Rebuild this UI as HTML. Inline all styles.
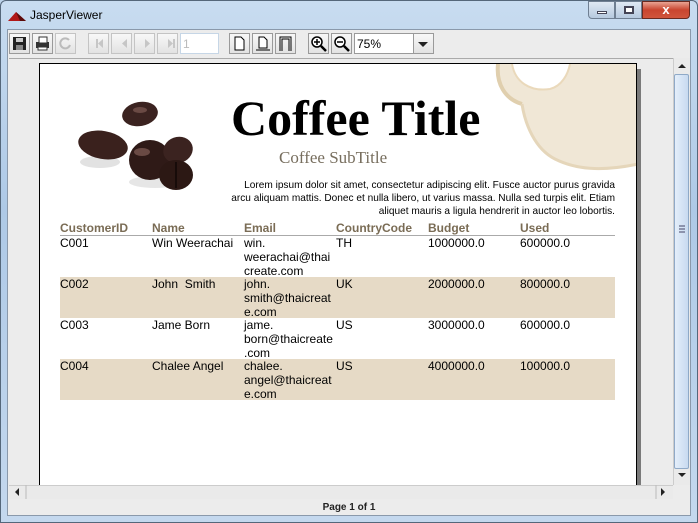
<!DOCTYPE html>
<html><head><style>
*{margin:0;padding:0;box-sizing:border-box}
body{width:698px;height:523px;overflow:hidden;background:#bcd3ea;font-family:"Liberation Sans",sans-serif;position:relative}
.abs{position:absolute}
.win{left:0;top:0;width:698px;height:523px;background:linear-gradient(#c8dcf0,#aec9e6 40%,#c4d8ee);border:1px solid #55677a;border-radius:6px 6px 0 0}
.title{left:30px;top:8px;font-size:12px;color:#000}
.client{left:7px;top:29px;width:684px;height:487px;background:#ececec;border:1px solid #8a99ab}
.btn{position:absolute;top:33px;width:21px;height:21px;border:1px solid #9a9a9a;background:linear-gradient(#f8f8f8,#e2e2e2)}
.dis{border-color:#c4c4c4}
.td{position:absolute;font-size:12px;color:#000;line-height:14px}
.th{position:absolute;top:221px;font-size:12px;font-weight:bold;color:#7a6c55}
.row{position:absolute;left:60px;width:555px;height:41px;background:#e6dac6}
</style></head><body>
<div class="abs win"></div>
<svg class="abs" style="left:7px;top:10px" width="20" height="12"><path d="M1 11 L9 2 L19 11 Z" fill="#b01818"/><path d="M9 2 L19 11 L13 11Z" fill="#5a0a0a"/></svg>
<div class="abs title">JasperViewer</div>
<div class="abs" style="left:588px;top:1px;width:27px;height:18px;border:1px solid #6f7f92;border-radius:0 0 0 4px;background:linear-gradient(#dfe9f4,#b6c9de)"><div style="margin:9px 8px;width:10px;height:3px;background:#fff;border:1px solid #445"></div></div>
<div class="abs" style="left:615px;top:1px;width:27px;height:18px;border:1px solid #6f7f92;background:linear-gradient(#dfe9f4,#b6c9de)"><div style="margin:4px 8px;width:10px;height:8px;border:2px solid #445;background:#fff"></div></div>
<div class="abs" style="left:642px;top:1px;width:48px;height:18px;border:1px solid #6a2a20;border-radius:0 0 4px 0;background:linear-gradient(#e9a393,#c9452f 50%,#d0553c);color:#fff;font-weight:bold;font-size:13px;text-align:center;line-height:16px">x</div>
<div class="abs client"></div>
<div class="btn" style="left:9px"><svg width="19" height="19"><rect x="3" y="3" width="13" height="13" fill="#222"/><rect x="6" y="4" width="7" height="4" fill="#ccc"/><rect x="6" y="11" width="7" height="5" fill="#888"/></svg></div>
<div class="btn" style="left:32px"><svg width="19" height="19"><rect x="3" y="8" width="13" height="6" fill="#333"/><rect x="6" y="3" width="8" height="6" fill="#fff" stroke="#333"/><rect x="5" y="13" width="9" height="3" fill="#fff" stroke="#333"/></svg></div>
<div class="btn dis" style="left:55px"><svg width="19" height="19"><path d="M13 6 A5 5 0 1 0 14 11" fill="none" stroke="#bbb" stroke-width="2"/></svg></div>
<div class="btn dis" style="left:88px"></div><div class="btn dis" style="left:111px"></div><div class="btn dis" style="left:134px"></div><div class="btn dis" style="left:157px"></div>
<div class="abs" style="left:180px;top:33px;width:39px;height:21px;border:1px solid #c6d6e6;background:#fff;color:#bbb;font-size:12px;padding:3px 2px">1</div>
<svg class="abs" style="left:88px;top:33px" width="92" height="21" fill="#c6c6c6"><rect x="8" y="6" width="2" height="9"/><path d="M15 6 L10 10.5 L15 15Z"/><path d="M39 6 L34 10.5 L39 15Z"/><path d="M57 6 L62 10.5 L57 15Z"/><path d="M80 6 L85 10.5 L80 15Z"/><rect x="85" y="6" width="2" height="9"/></svg>
<div class="btn" style="left:229px"><svg width="19" height="19"><path d="M5 3 H11 L14 6 V16 H5Z" fill="#fff" stroke="#000"/></svg></div>
<div class="btn" style="left:252px"><svg width="19" height="19"><path d="M6 3 H11 L14 6 V14 H6Z" fill="#fff" stroke="#000"/><path d="M3 16 H17" stroke="#000"/></svg></div>
<div class="btn" style="left:275px"><svg width="19" height="19"><path d="M4 17 V3 H15 V17 M6 17 V5 H13 V17" fill="none" stroke="#000"/></svg></div>
<div class="btn" style="left:308px"><svg width="19" height="19"><circle cx="8" cy="8" r="5" fill="#fff" stroke="#000" stroke-width="1.5"/><path d="M12 12 L17 17" stroke="#000" stroke-width="2.5"/><path d="M5 8 H11 M8 5 V11" stroke="#000" stroke-width="1.5"/></svg></div>
<div class="btn" style="left:331px"><svg width="19" height="19"><circle cx="8" cy="8" r="5" fill="#fff" stroke="#000" stroke-width="1.5"/><path d="M12 12 L17 17" stroke="#000" stroke-width="2.5"/><path d="M5 8 H11" stroke="#000" stroke-width="1.5"/></svg></div>
<div class="abs" style="left:354px;top:33px;width:60px;height:21px;border:1px solid #9a9a9a;background:#fff;font-size:12px;padding:3px 2px">75%</div>
<div class="btn" style="left:413px;width:21px"><svg width="19" height="19"><path d="M4 8 H14 L9 13Z" fill="#222"/></svg></div>
<div class="abs" style="left:9px;top:58px;width:664px;height:427px;background:#ececec;border-top:1px solid #aaa"></div>
<div class="abs" style="left:636px;top:69px;width:5px;height:416px;background:#7a7a7a"></div>
<div class="abs" style="left:39px;top:63px;width:598px;height:423px;background:#fff;border:1px solid #000;border-bottom:none;overflow:hidden">
 <svg class="abs" style="left:410px;top:0" width="188" height="130">
  <path d="M48 0 C46 20 55 35 72 40 C75 60 85 85 105 95 C125 105 150 108 188 100 L188 0 Z" fill="#f0e7d6"/>
  <path d="M62 0 C65 18 80 28 100 25 C112 22 118 10 120 0 Z" fill="#fff"/>
  <path d="M48 0 C46 20 55 35 72 40" fill="none" stroke="#e0cfae" stroke-width="4"/>
  <path d="M72 40 C75 60 85 85 105 95 C125 105 150 108 188 100" fill="none" stroke="#e5d6ba" stroke-width="3"/>
  <path d="M62 0 C65 18 80 28 100 25 C112 22 118 10 120 0" fill="none" stroke="#ead9bb" stroke-width="2"/>
 </svg>
</div>
<svg class="abs" style="left:70px;top:100px" width="130" height="90">
 <ellipse cx="30" cy="62" rx="20" ry="6" fill="#e2e2e2"/>
 <ellipse cx="85" cy="82" rx="26" ry="6" fill="#e6e6e6"/>
 <ellipse cx="70" cy="14" rx="18" ry="12" fill="#3b2320" transform="rotate(-10 70 14)"/>
 <ellipse cx="33" cy="45" rx="25" ry="14" fill="#3a211d" transform="rotate(10 33 45)"/>
 <ellipse cx="80" cy="60" rx="21" ry="20" fill="#2f1a17"/>
 <ellipse cx="108" cy="50" rx="15" ry="13" fill="#3b2320" transform="rotate(-20 108 50)"/>
 <ellipse cx="106" cy="75" rx="17" ry="15" fill="#2c1814"/>
 <path d="M106 62 V88" stroke="#170b09" stroke-width="2"/>
 <ellipse cx="72" cy="52" rx="8" ry="4" fill="#6a4a44"/>
 <ellipse cx="70" cy="10" rx="7" ry="3" fill="#6a4a44"/>
</svg>
<div class="abs" style="left:231px;top:90px;font-family:'Liberation Serif',serif;font-weight:bold;font-size:50px;line-height:56px">Coffee Title</div>
<div class="abs" style="left:279px;top:148px;font-family:'Liberation Serif',serif;font-size:17px;color:#776e5e">Coffee SubTitle</div>
<div class="abs" style="left:224px;top:179px;width:391px;text-align:right;font-size:10.1px;line-height:13px">Lorem ipsum dolor sit amet, consectetur adipiscing elit. Fusce auctor purus gravida arcu aliquam mattis. Donec et nulla libero, ut varius massa. Nulla sed turpis elit. Etiam aliquet mauris a ligula hendrerit in auctor leo lobortis.</div>
<div class="th" style="left:60px">CustomerID</div><div class="th" style="left:152px">Name</div><div class="th" style="left:244px">Email</div><div class="th" style="left:336px">CountryCode</div><div class="th" style="left:428px">Budget</div><div class="th" style="left:520px">Used</div>
<div class="abs" style="left:60px;top:235px;width:555px;height:1px;background:#aaa"></div>
<div class="row" style="top:277px"></div><div class="row" style="top:359px"></div>
<div class="td" style="left:60px;top:236px">C001</div><div class="td" style="left:152px;top:236px">Win Weerachai</div><div class="td" style="left:244px;top:236px">win.<br>weerachai@thai<br>create.com</div><div class="td" style="left:336px;top:236px">TH</div><div class="td" style="left:428px;top:236px">1000000.0</div><div class="td" style="left:520px;top:236px">600000.0</div>
<div class="td" style="left:60px;top:277px">C002</div><div class="td" style="left:152px;top:277px">John&nbsp; Smith</div><div class="td" style="left:244px;top:277px">john.<br>smith@thaicreat<br>e.com</div><div class="td" style="left:336px;top:277px">UK</div><div class="td" style="left:428px;top:277px">2000000.0</div><div class="td" style="left:520px;top:277px">800000.0</div>
<div class="td" style="left:60px;top:318px">C003</div><div class="td" style="left:152px;top:318px">Jame Born</div><div class="td" style="left:244px;top:318px">jame.<br>born@thaicreate<br>.com</div><div class="td" style="left:336px;top:318px">US</div><div class="td" style="left:428px;top:318px">3000000.0</div><div class="td" style="left:520px;top:318px">600000.0</div>
<div class="td" style="left:60px;top:359px">C004</div><div class="td" style="left:152px;top:359px">Chalee Angel</div><div class="td" style="left:244px;top:359px">chalee.<br>angel@thaicreat<br>e.com</div><div class="td" style="left:336px;top:359px">US</div><div class="td" style="left:428px;top:359px">4000000.0</div><div class="td" style="left:520px;top:359px">100000.0</div>
<div class="abs" style="left:673px;top:58px;width:17px;height:427px;background:#eaeaea;border-left:1px solid #ccc"></div>
<div class="abs" style="left:674px;top:74px;width:15px;height:395px;border:1px solid #8fa9c7;border-radius:2px;background:linear-gradient(90deg,#e4eefa,#c8daf0)"></div>
<svg class="abs" style="left:674px;top:58px" width="16" height="427"><path d="M4 10 L8 6 L12 10Z" fill="#222"/><path d="M4 415 L8 419 L12 415Z" fill="#222"/><path d="M5 168 H11 M5 171 H11 M5 174 H11" stroke="#446"/></svg>
<div class="abs" style="left:9px;top:485px;width:664px;height:14px;background:#eaeaea;border-top:1px solid #ccc"></div>
<svg class="abs" style="left:9px;top:485px" width="664" height="14"><path d="M6 7 L10 3 L10 11Z" fill="#222"/><path d="M652 3 L656 7 L652 11Z" fill="#222"/><path d="M17 0 V14 M647 0 V14" stroke="#bbb"/></svg>
<div class="abs" style="left:9px;top:500px;width:680px;height:15px;font-size:10px;text-align:center;color:#222;line-height:16px;font-weight:bold">Page 1 of 1</div>
</body></html>
